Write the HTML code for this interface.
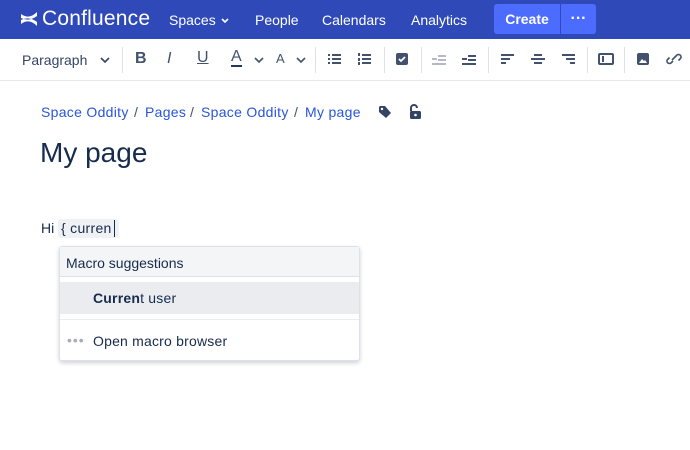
<!DOCTYPE html>
<html><head><style>
*{box-sizing:border-box;margin:0;padding:0}
body{width:690px;height:450px;overflow:hidden;background:#fff;font-family:"Liberation Sans",sans-serif;color:#172b4d;position:relative}
.hdr{position:absolute;left:0;top:0;width:690px;height:39px;background:#2f4ab8}
.hdr span{position:absolute;color:#fff;font-size:14px;top:12px}
.tb{position:absolute;left:0;top:39px;width:690px;height:42px;background:#fff;border-bottom:1px solid #e6e8ec}
.sep{position:absolute;top:8px;width:1px;height:26px;background:#dfe1e6}
.ic{position:absolute;top:13px}
.bc{position:absolute;top:104px;font-size:14px;color:#2855d9;white-space:nowrap;letter-spacing:0.3px}
.sl{position:absolute;top:104px;font-size:14px;color:#42526e}
</style></head><body>
<div class="hdr">
 <svg style="position:absolute;left:20px;top:11px" width="18" height="16" viewBox="0 0 18 16"><path d="M1 3 Q9 9 17 1 L17 5 Q9 11 1 7Z M1 13 Q9 7 17 15 L17 11 Q9 5 1 9Z" fill="#fff"/></svg>
 <span style="left:42px;top:7px;font-size:21px;letter-spacing:0.2px">Confluence</span>
 <span style="left:169px">Spaces <svg width="10" height="8"><path d="M2 2l3 3 3-3" stroke="#fff" stroke-width="1.6" fill="none"/></svg></span>
 <span style="left:255px">People</span>
 <span style="left:322px">Calendars</span>
 <span style="left:411px">Analytics</span>
 <div style="position:absolute;left:494px;top:4px;width:66px;height:30px;background:#4c6cff;border-radius:3px 0 0 3px;color:#fff;font-weight:bold;font-size:14px;text-align:center;line-height:30px">Create</div>
 <div style="position:absolute;left:561px;top:4px;width:35px;height:30px;background:#4c6cff;border-radius:0 3px 3px 0;color:#fff;font-weight:bold;text-align:center;line-height:30px">···</div>
</div>
<div class="tb">
 <span style="position:absolute;left:22px;top:13px;font-size:14px;color:#344563">Paragraph</span>
 <svg class="ic" style="left:100px;top:17px" width="10" height="8"><path d="M1 2l4 4 4-4" stroke="#344563" stroke-width="1.6" fill="none"/></svg>
 <div class="sep" style="left:122px"></div>
 <span style="position:absolute;left:135px;top:11px;font-size:16px;font-weight:bold;color:#42526e">B</span>
 <span style="position:absolute;left:167px;top:11px;font-size:16px;font-style:italic;color:#42526e">I</span>
 <span style="position:absolute;left:197px;top:10px;font-size:16px;text-decoration:underline;color:#42526e">U</span>
 <span style="position:absolute;left:231px;top:10px;font-size:16px;color:#42526e;border-bottom:2px solid #253858;line-height:16px">A</span>
 <svg class="ic" style="left:254px;top:17px" width="10" height="8"><path d="M1 2l4 4 4-4" stroke="#42526e" stroke-width="1.6" fill="none"/></svg>
 <span style="position:absolute;left:276px;top:12px;font-size:13px;color:#42526e">A</span>
 <svg class="ic" style="left:296px;top:17px" width="10" height="8"><path d="M1 2l4 4 4-4" stroke="#42526e" stroke-width="1.6" fill="none"/></svg>
 <div class="sep" style="left:315px"></div>
 <svg class="ic" style="left:328px" width="14" height="14" fill="#42526e"><rect x="0" y="2" width="2" height="2"/><rect x="0" y="6" width="2" height="2"/><rect x="0" y="10" width="2" height="2"/><rect x="4" y="2" width="9" height="2"/><rect x="4" y="6" width="9" height="2"/><rect x="4" y="10" width="9" height="2"/></svg>
 <svg class="ic" style="left:358px" width="14" height="14" fill="#42526e"><rect x="0" y="1" width="2" height="3"/><rect x="0" y="6" width="2" height="3"/><rect x="0" y="10" width="2" height="3"/><rect x="4" y="2" width="9" height="2"/><rect x="4" y="6" width="9" height="2"/><rect x="4" y="10" width="9" height="2"/></svg>
 <div class="sep" style="left:384px"></div>
 <svg class="ic" style="left:395px" width="14" height="14"><rect x="1" y="1" width="12" height="12" rx="2" fill="#42526e"/><path d="M4 7l2 2 4-4" stroke="#fff" stroke-width="1.8" fill="none"/></svg>
 <div class="sep" style="left:421px"></div>
 <svg class="ic" style="left:432px" width="14" height="14" fill="#b3bac5"><rect x="0" y="6" width="5" height="2"/><rect x="6" y="3" width="8" height="2"/><rect x="6" y="7" width="8" height="2"/><rect x="0" y="11" width="14" height="2"/></svg>
 <svg class="ic" style="left:462px" width="14" height="14" fill="#42526e"><rect x="0" y="6" width="5" height="2"/><rect x="6" y="3" width="8" height="2"/><rect x="6" y="7" width="8" height="2"/><rect x="0" y="11" width="14" height="2"/></svg>
 <div class="sep" style="left:488px"></div>
 <svg class="ic" style="left:501px" width="14" height="14" fill="#42526e"><rect x="0" y="2" width="13" height="2"/><rect x="0" y="6" width="9" height="2"/><rect x="0" y="10" width="5" height="2"/></svg>
 <svg class="ic" style="left:531px" width="14" height="14" fill="#42526e"><rect x="3" y="2" width="8" height="2"/><rect x="0" y="6" width="14" height="2"/><rect x="3" y="10" width="8" height="2"/></svg>
 <svg class="ic" style="left:562px" width="14" height="14" fill="#42526e"><rect x="0" y="2" width="13" height="2"/><rect x="4" y="6" width="9" height="2"/><rect x="8" y="10" width="5" height="2"/></svg>
 <div class="sep" style="left:587px"></div>
 <svg class="ic" style="left:598px" width="16" height="14"><rect x="1" y="2" width="14" height="10" rx="1" fill="none" stroke="#42526e" stroke-width="2"/><rect x="4" y="4" width="2" height="6" fill="#42526e"/></svg>
 <div class="sep" style="left:624px"></div>
 <svg class="ic" style="left:636px" width="14" height="14"><rect x="1" y="1" width="12" height="12" rx="2" fill="#42526e"/><path d="M3 11l3-4 2 2 1-1 2 3z" fill="#fff"/></svg>
 <svg class="ic" style="left:666px" width="16" height="14"><path d="M7 9l-2 2a2.5 2.5 0 01-3.5-3.5l2-2 M9 5l2-2a2.5 2.5 0 013.5 3.5l-2 2 M6 8l4-4" stroke="#42526e" stroke-width="1.6" fill="none"/></svg>
</div>
<span class="bc" style="left:41px">Space Oddity</span>
<span class="sl" style="left:134px">/</span>
<span class="bc" style="left:145px">Pages</span>
<span class="sl" style="left:190px">/</span>
<span class="bc" style="left:201px">Space Oddity</span>
<span class="sl" style="left:294px">/</span>
<span class="bc" style="left:305px">My page</span>
<svg style="position:absolute;left:378px;top:105px" width="14" height="14"><path d="M1 2v5l7 6 5-5-6-7H2z" fill="#344563"/><circle cx="4" cy="4" r="1.2" fill="#fff"/></svg>
<svg style="position:absolute;left:408px;top:104px" width="14" height="16"><path d="M3 7V4a3 3 0 016 0" stroke="#344563" stroke-width="2" fill="none"/><rect x="2" y="7" width="11" height="8" rx="1.5" fill="#344563"/><circle cx="7.5" cy="11" r="1.3" fill="#fff"/></svg>
<div style="position:absolute;left:40px;top:137px;font-size:28px;color:#172b4d">My page</div>
<div style="position:absolute;left:41px;top:220px;font-size:14px;color:#172b4d">Hi</div>
<div style="position:absolute;left:58px;top:219px;width:61px;height:19px;background:#f0f1f4;border-radius:3px"></div>
<div style="position:absolute;left:61px;top:220px;font-size:14px;color:#172b4d;letter-spacing:0.3px">{ curren</div>
<div style="position:absolute;left:114px;top:220px;width:1px;height:17px;background:#172b4d"></div>
<div style="position:absolute;left:59px;top:246px;width:301px;height:115px;background:#fff;border:1px solid #dfe1e6;border-radius:3px;box-shadow:0 2px 4px rgba(9,30,66,.2)">
 <div style="height:30px;background:#f4f5f7;border-bottom:1px solid #dfe1e6;font-size:14px;padding:8px 0 0 6px">Macro suggestions</div>
 <div style="position:absolute;left:0;top:35px;width:299px;height:32px;background:#ebecf0;font-size:14px;padding:8px 0 0 33px;letter-spacing:0.2px"><b>Curren</b>t user</div>
 <div style="position:absolute;left:0;top:72px;width:299px;height:1px;background:#ebecf0"></div>
 <div style="position:absolute;left:7px;top:85px;font-size:14px;color:#a5adba;letter-spacing:1px">•••</div>
 <div style="position:absolute;left:33px;top:86px;font-size:14px;letter-spacing:0.2px">Open macro browser</div>
</div>
</body></html>
